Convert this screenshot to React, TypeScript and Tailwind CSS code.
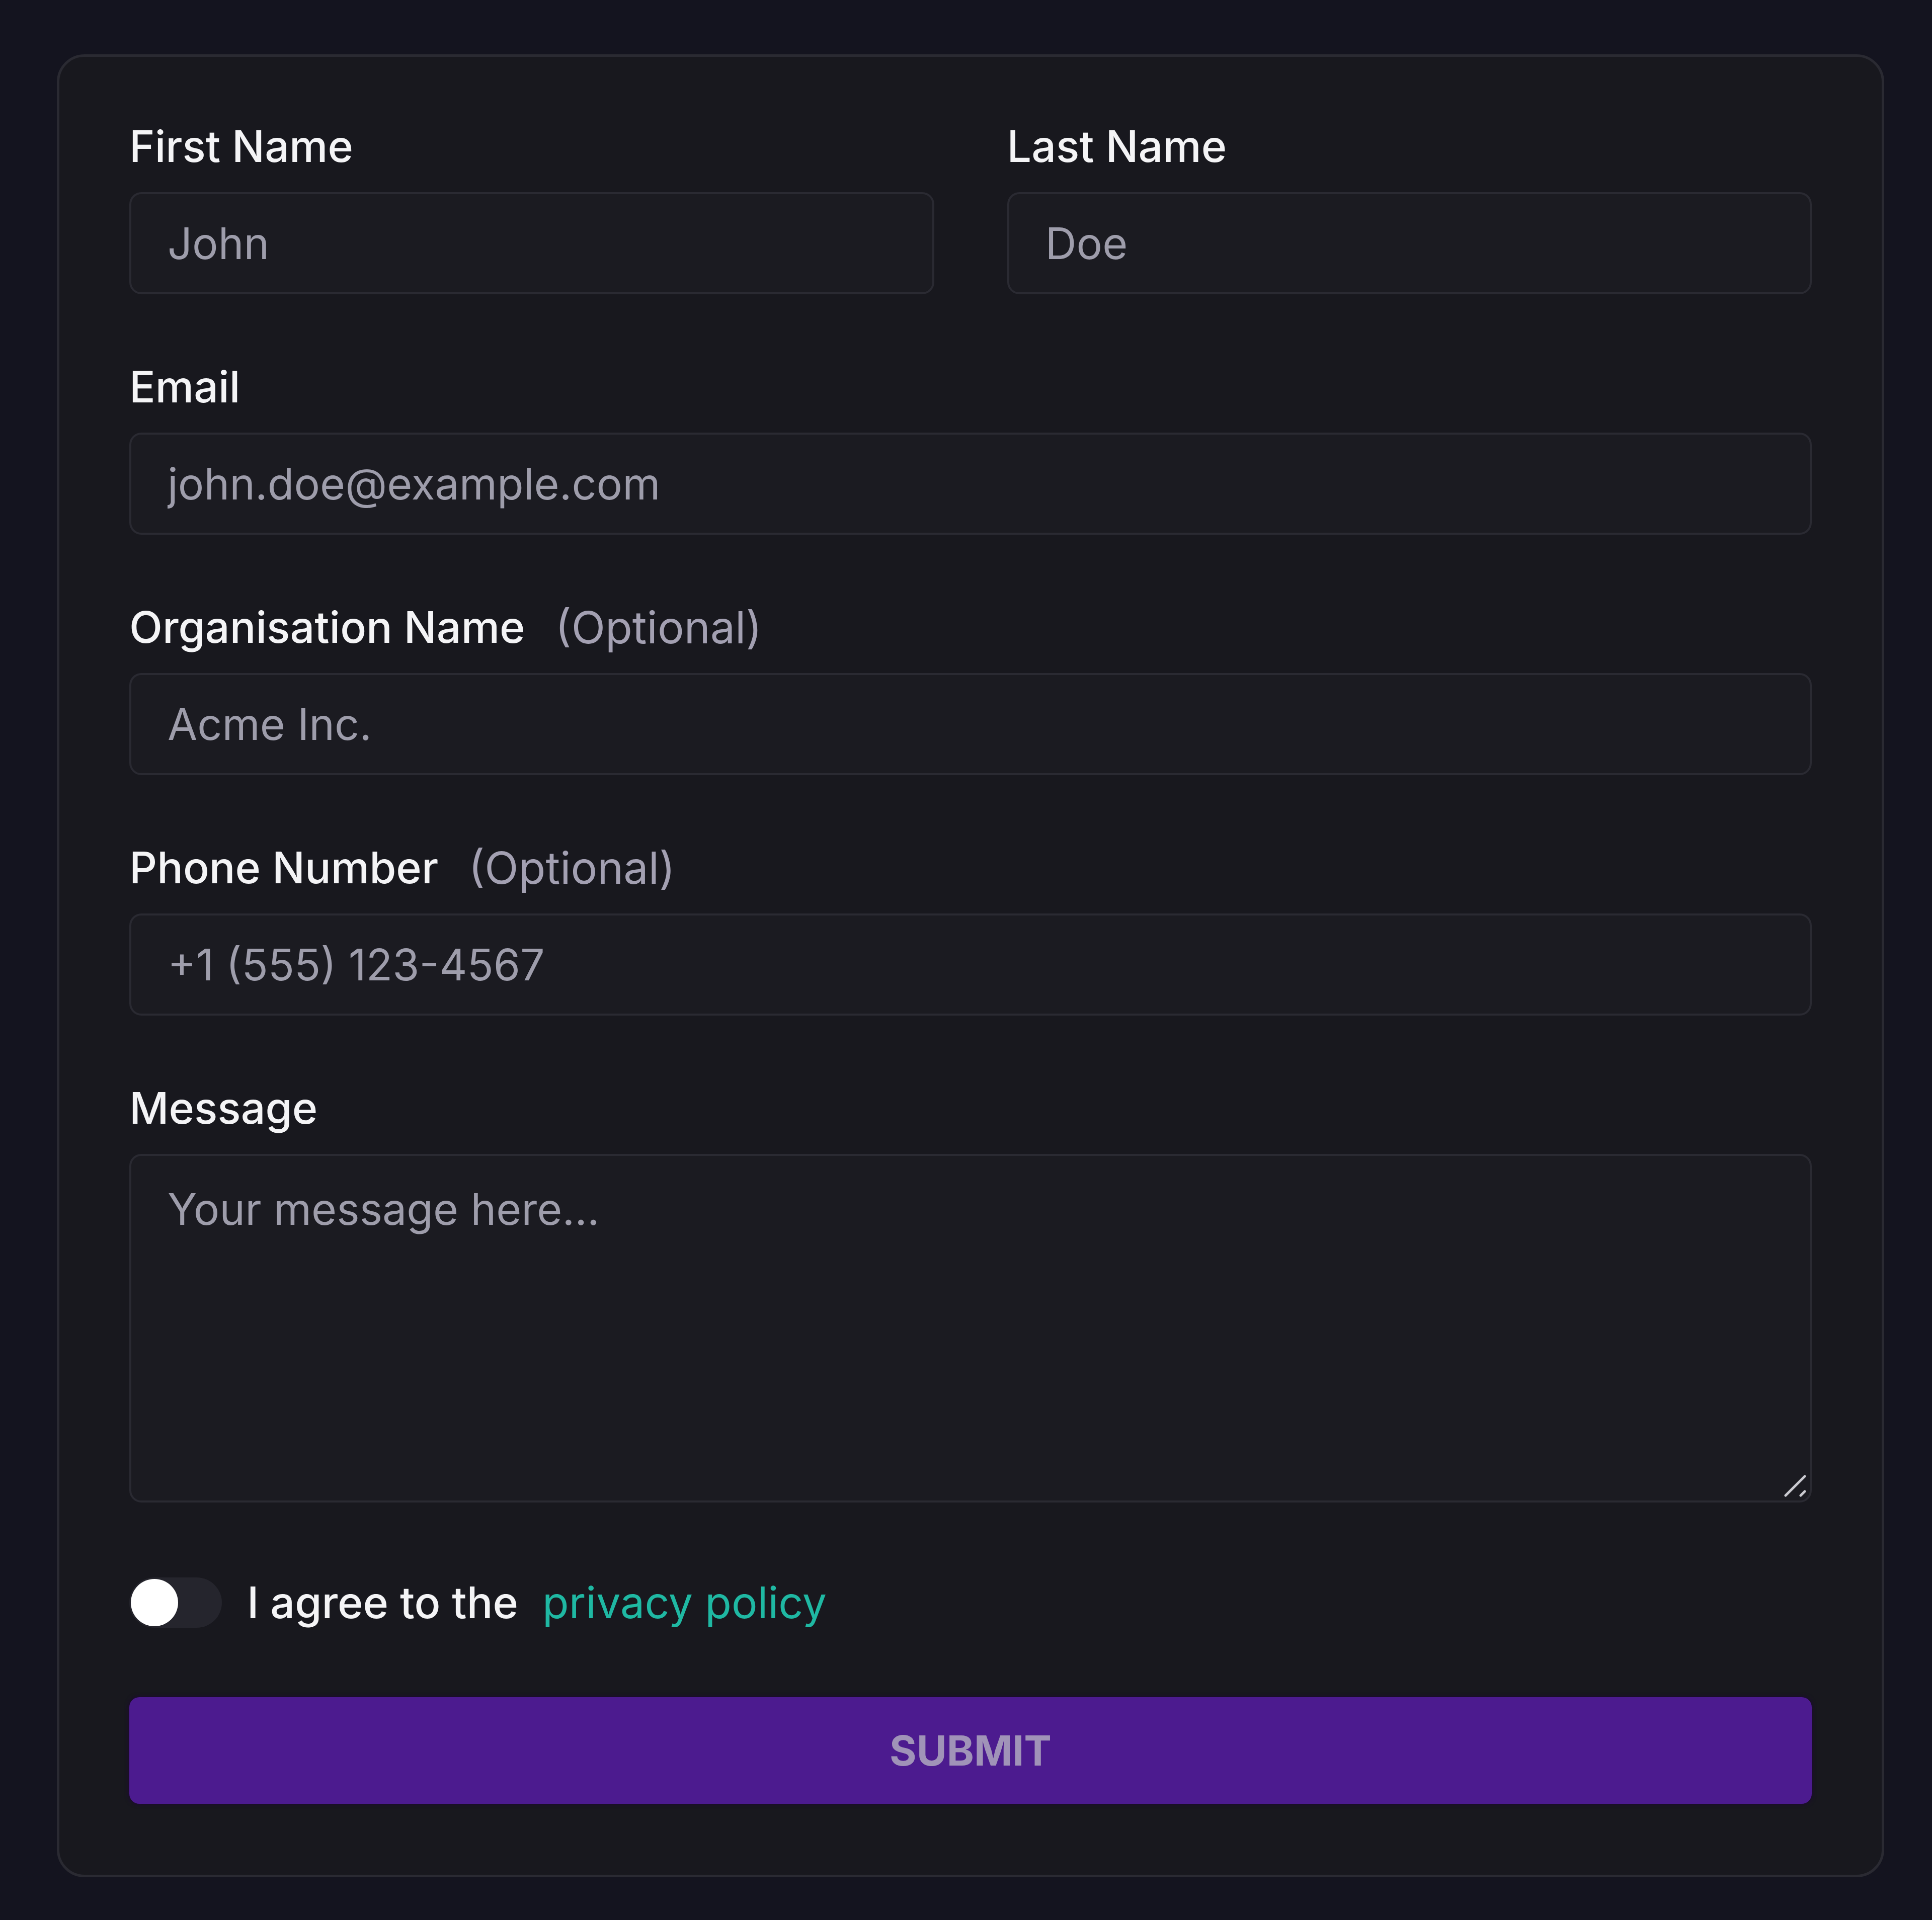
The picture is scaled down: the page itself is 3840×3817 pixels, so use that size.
import { useState } from 'react';

const font = { fontFamily: 'Inter, "Noto Sans", sans-serif' };

const Label = ({ text, optional }: { text: string; optional?: boolean }) => (
  <label className="flex items-center h-[120px] mb-[31px] text-[86px] leading-[120px] font-medium text-[#f4f4f6]">
    <span>{text}</span>
    {optional && <span className="ml-[60px] text-[88px] font-normal text-[#a3a0b2]">(Optional)</span>}
  </label>
);

const Field = ({ label, placeholder, optional }: { label: string; placeholder: string; optional?: boolean }) => (
  <div className="flex flex-col">
    <Label text={label} optional={optional} />
    <input
      placeholder={placeholder}
      className="h-[203px] w-full rounded-[24px] border-[4px] border-[#2a2a32] bg-[#1b1b21] pl-[72px] pr-[72px] text-[86px] text-white placeholder:text-[#9e9dab] outline-none"
    />
  </div>
);

const App = () => {
  const [agreed, setAgreed] = useState(false);

  return (
    <div className="min-h-screen w-full bg-[#14141f] pl-[113px] pr-[95px] pt-[108px] pb-[88px]" style={font}>
      <form
        className="flex flex-col rounded-[55px] border-[5px] border-[#2a2a32] bg-[#18181e] px-[139px] pt-[118px] pb-[141px]"
        onSubmit={e => e.preventDefault()}
      >
        <div className="grid grid-cols-2 gap-x-[145px]">
          <Field label="First Name" placeholder="John" />
          <Field label="Last Name" placeholder="Doe" />
        </div>

        <div className="mt-[124px] flex flex-col gap-[124px]">
          <Field label="Email" placeholder="john.doe@example.com" />
          <Field label="Organisation Name" placeholder="Acme Inc." optional />
          <Field label="Phone Number" placeholder="+1 (555) 123-4567" optional />
          <div className="flex flex-col">
            <Label text="Message" />
            <div className="relative">
              <textarea
                placeholder="Your message here..."
                className="block h-[693px] w-full resize-none rounded-[24px] border-[4px] border-[#2a2a32] bg-[#1b1b21] px-[72px] pt-[40px] text-[86px] leading-[132px] text-white placeholder:text-[#9e9dab] outline-none"
              />
              <svg className="absolute right-[8px] bottom-[8px] h-[50px] w-[50px]" viewBox="0 0 50 50">
                <path d="M6 44 L44 6 M36 44 L44 36" stroke="#c9c9cf" strokeWidth="5" strokeLinecap="round" />
              </svg>
            </div>
          </div>
        </div>

        <div className="mt-[139px] flex h-[120px] items-center">
          <button
            type="button"
            onClick={() => setAgreed(!agreed)}
            className={`relative h-[100px] w-[184px] shrink-0 rounded-full ${agreed ? 'bg-[#14b8a6]' : 'bg-[#25252d]'}`}
          >
            <span
              className={`absolute top-[3px] h-[94px] w-[94px] rounded-full bg-white ${agreed ? 'right-[3px]' : 'left-[3px]'}`}
            />
          </button>
          <span className="ml-[50px] text-[86px] leading-[120px] font-medium text-[#f4f4f6]">I agree to the</span>
          <a href="#" className="ml-[48px] text-[86px] leading-[120px] text-[#1fb8a3]">
            privacy policy
          </a>
        </div>

        <button
          type="submit"
          className="mt-[128px] h-[212px] w-full rounded-[20px] bg-[#4c1b8f] text-[82px] font-bold uppercase text-[#a093b8] shadow-[0_0_10px_rgba(30,0,60,0.9)]"
        >
          Submit
        </button>
      </form>
    </div>
  );
};

export default App;
